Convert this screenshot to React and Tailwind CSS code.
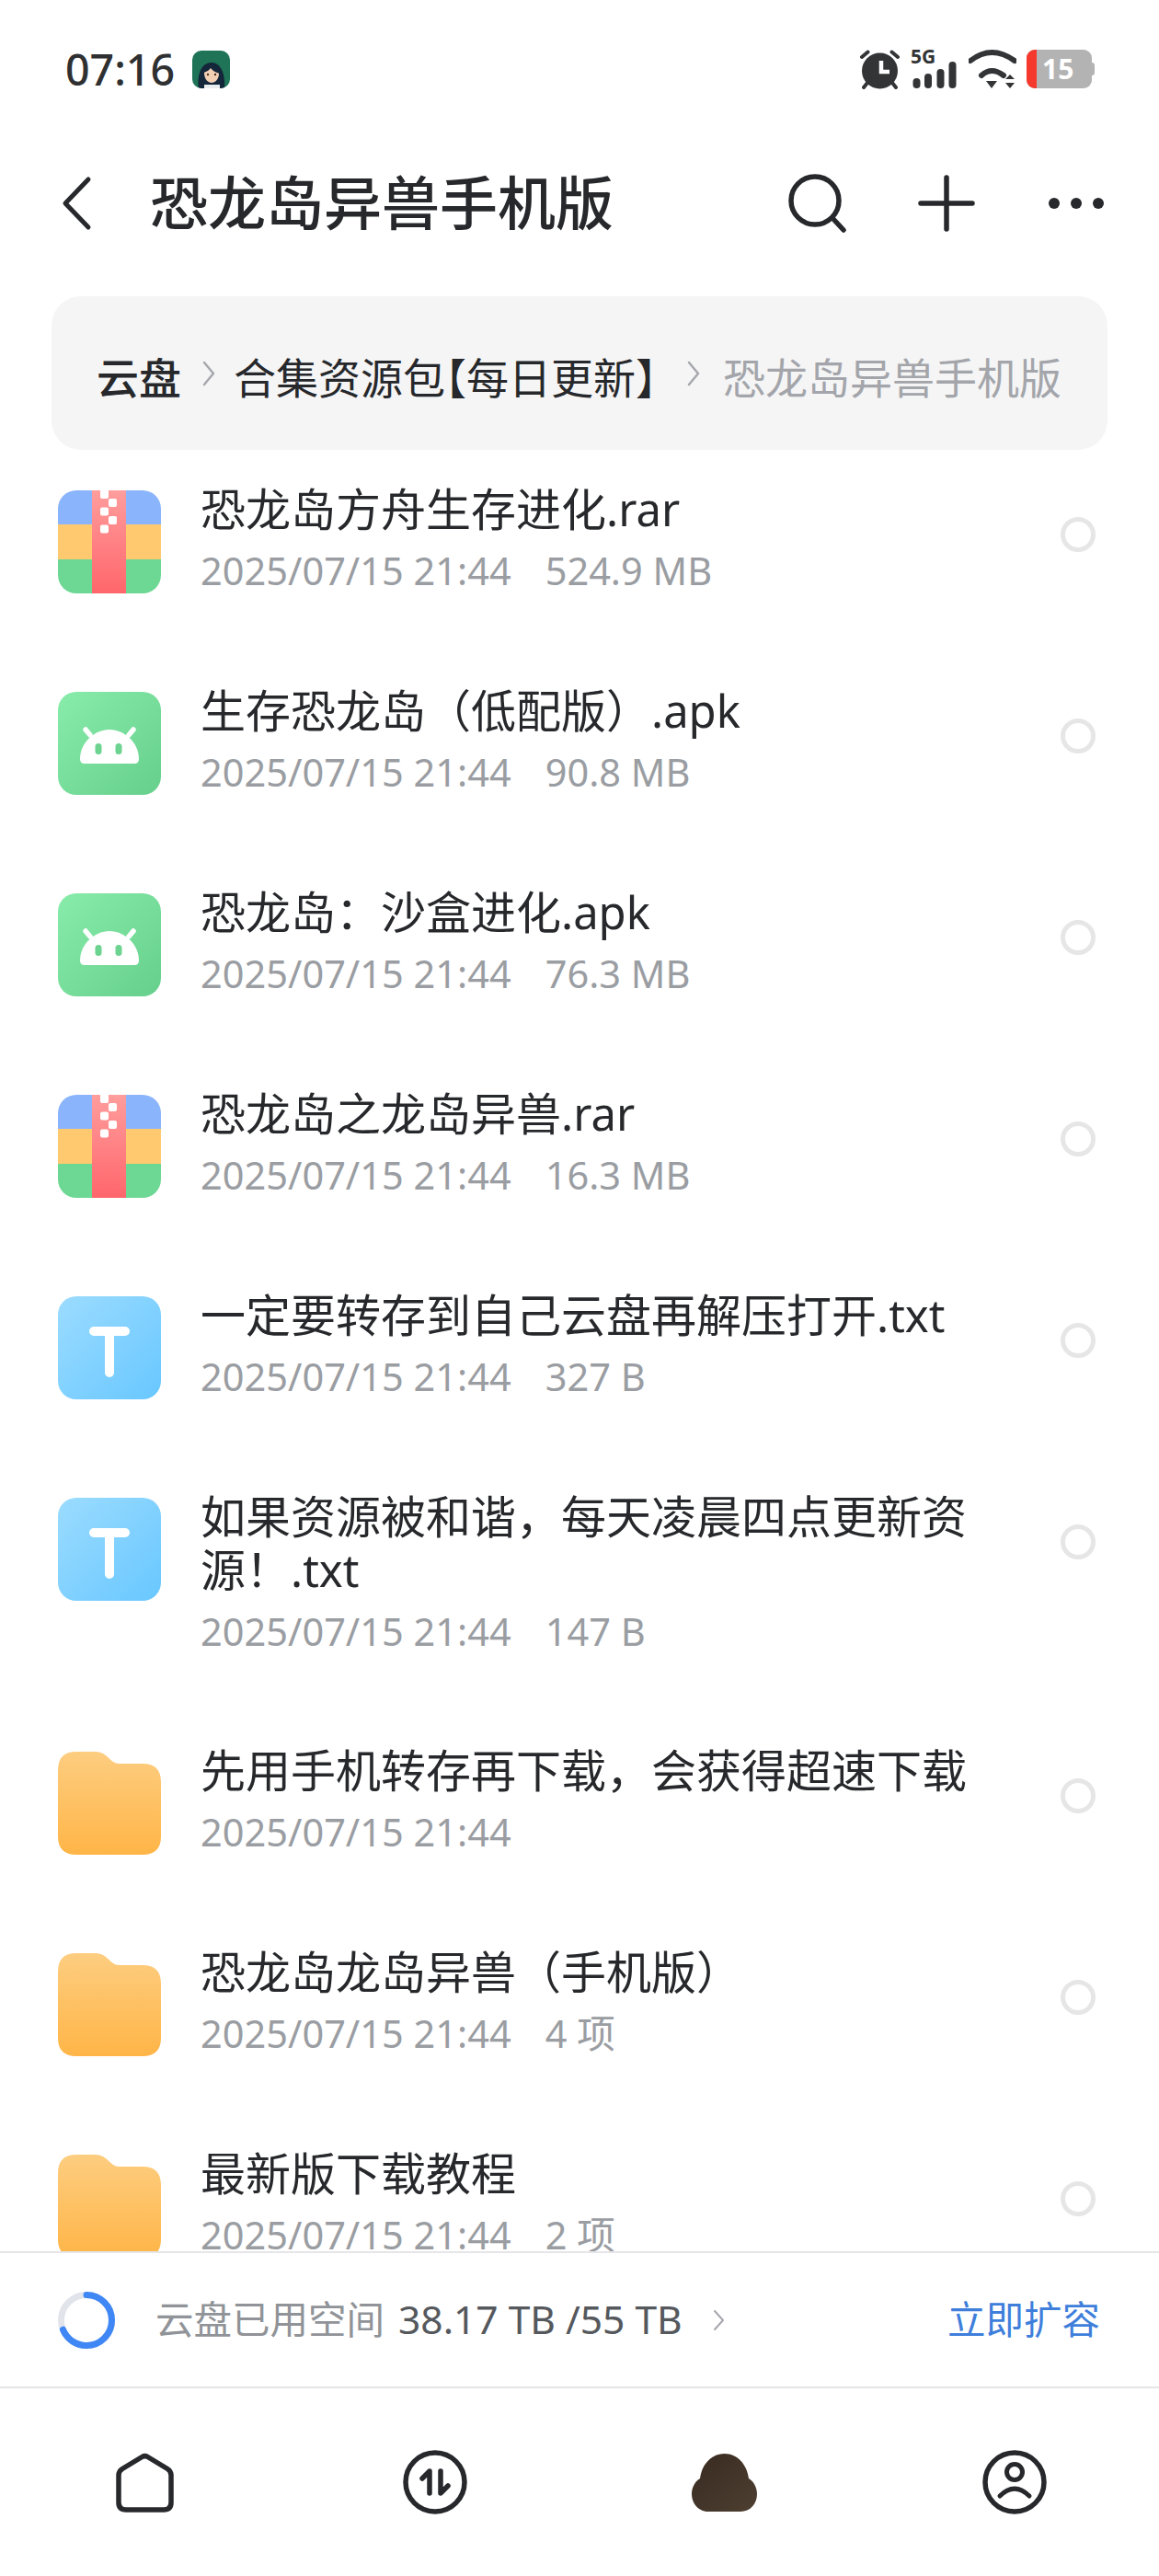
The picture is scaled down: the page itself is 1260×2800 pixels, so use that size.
import React from "react";

const files = [
  { name: "恐龙岛方舟生存进化.rar", extra: "524.9 MB", type: "rar" },
  { name: "生存恐龙岛（低配版）.apk", extra: "90.8 MB", type: "apk" },
  { name: "恐龙岛：沙盒进化.apk", extra: "76.3 MB", type: "apk" },
  { name: "恐龙岛之龙岛异兽.rar", extra: "16.3 MB", type: "rar" },
  { name: "一定要转存到自己云盘再解压打开.txt", extra: "327 B", type: "txt" },
  { name: "如果资源被和谐，每天凌晨四点更新资源！.txt", extra: "147 B", type: "txt" },
  { name: "先用手机转存再下载，会获得超速下载", extra: "", type: "folder" },
  { name: "恐龙岛龙岛异兽（手机版）", extra: "4 项", type: "folder" },
  { name: "最新版下载教程", extra: "2 项", type: "folder" },
];

const RarIcon = () => (
  <svg width="112" height="112" viewBox="0 0 112 112">
    <defs>
      <clipPath id="rarClip"><rect width="112" height="112" rx="20" /></clipPath>
      <linearGradient id="zip" x1="0" y1="0" x2="0" y2="1">
        <stop offset="0" stopColor="#ff9d9d" />
        <stop offset="1" stopColor="#ff666b" />
      </linearGradient>
    </defs>
    <g clipPath="url(#rarClip)">
      <rect width="112" height="38" fill="#8ab4fc" />
      <rect y="37" width="112" height="38" fill="#ffc970" />
      <rect y="75" width="112" height="37" fill="#6dd794" />
      <rect x="37" width="37" height="112" fill="url(#zip)" />
      <rect x="46" y="-2" width="9" height="11" rx="2" fill="#fff" />
      <rect x="55" y="9" width="9" height="9" rx="2" fill="#fff" />
      <rect x="46" y="18.500" width="9" height="9" rx="2" fill="#fff" />
      <rect x="55" y="28" width="9" height="9" rx="2" fill="#fff" />
      <rect x="46" y="37.500" width="9" height="9" rx="2" fill="#fff" />
    </g>
  </svg>
);

const ApkIcon = () => (
  <svg width="112" height="112" viewBox="0 0 112 112">
    <defs>
      <linearGradient id="apkBg" x1="0" y1="0" x2="1" y2="1">
        <stop offset="0" stopColor="#88ecaa" />
        <stop offset="1" stopColor="#66cf8c" />
      </linearGradient>
    </defs>
    <rect width="112" height="112" rx="20" fill="url(#apkBg)" />
    <path d="M29 78H83Q88 78 88 73C88 55 72 41 56 41C40 41 24 55 24 73Q24 78 29 78Z" fill="#fff" />
    <path d="M35 47L30 41M77 47L82 41" stroke="#fff" strokeWidth="5.500" strokeLinecap="round" />
    <rect x="40.500" y="56" width="7" height="12" rx="3.500" fill="#6cd390" />
    <rect x="62.500" y="56" width="7" height="12" rx="3.500" fill="#6cd390" />
  </svg>
);

const TxtIcon = () => (
  <svg width="112" height="112" viewBox="0 0 112 112">
    <defs>
      <linearGradient id="txtBg" x1="0" y1="0" x2="1" y2="1">
        <stop offset="0" stopColor="#9cdcff" />
        <stop offset="1" stopColor="#68c7ff" />
      </linearGradient>
    </defs>
    <rect width="112" height="112" rx="20" fill="url(#txtBg)" />
    <path d="M39 38H73M56 38V83" stroke="#fff" strokeWidth="10" strokeLinecap="round" />
  </svg>
);

const FolderIcon = () => (
  <svg width="112" height="112" viewBox="0 0 112 112">
    <defs>
      <linearGradient id="folderBg" x1="0" y1="0" x2="0" y2="1">
        <stop offset="0" stopColor="#fdcd80" />
        <stop offset="1" stopColor="#ffb547" />
      </linearGradient>
    </defs>
    <path d="M0 20Q0 0 20 0H40Q47 0 52 4L58 9.500Q62 13 67 13H92Q112 13 112 33V92Q112 112 92 112H20Q0 112 0 92Z" fill="url(#folderBg)" />
  </svg>
);

const icons = { rar: RarIcon, apk: ApkIcon, txt: TxtIcon, folder: FolderIcon };

const Crumb = ({ className }) => (
  <svg width="16" height="28" viewBox="0 0 16 28" className={className}>
    <path d="M3 2L13 14L3 26" fill="none" stroke="#a6a8ad" strokeWidth="2.500" strokeLinecap="round" strokeLinejoin="round" />
  </svg>
);

const Row = ({ file }) => {
  const Icon = icons[file.type];
  return (
    <div className="flex items-start shrink-0">
      <div className="ml-[63px] mt-[9px] w-[112px] h-[112px] shrink-0"><Icon /></div>
      <div className="ml-[43px] w-[860px]">
        <div className="text-[49px] leading-[58px] text-[#26282b]">{file.name}</div>
        <div className="mt-[15px] h-[47px] flex text-[41.500px] leading-[47px] text-[#9a9da2]">
          <span>2025/07/15 21:44</span>
          {file.extra && <span className="ml-[37px]">{file.extra}</span>}
        </div>
      </div>
      <div className="ml-[75px] mt-[38px] w-[38px] h-[38px] shrink-0 rounded-full border-[5px] border-[#e6e6e6]" />
    </div>
  );
};

const App = () => {
  return (
    <div lang="zh-CN" className="w-[1260px] h-[2800px] bg-white flex flex-col overflow-hidden font-['Noto_Sans','Noto_Sans_CJK_SC',sans-serif]">
      {/* status bar */}
      <div className="h-[150px] shrink-0 flex items-center pl-[71px] pr-[70px]">
        <span className="text-[46.500px] leading-none font-medium text-[#2f3031]">07:16</span>
        <svg width="41" height="41" viewBox="0 0 41 41" className="ml-[19px]">
          <defs><clipPath id="ava"><rect width="41" height="41" rx="10" /></clipPath></defs>
          <g clipPath="url(#ava)">
            <rect width="41" height="41" fill="#1f7356" />
            <path d="M7 41C5 30 8 13 21 13C33 13 36 30 35 41Z" fill="#14263a" />
            <path d="M13 41H30V37H13Z" fill="#e8eef0" />
            <path d="M13 24C13 19 17 17 21 17C26 17 29 20 29 25C29 31 25 35 21 35C17 35 13 31 13 24Z" fill="#f3cfb4" />
            <path d="M12 24C13 18 18 15 23 16C27 17 30 20 30 25C26 24 22 22 20 19C18 22 15 23 12 24Z" fill="#14263a" />
            <circle cx="17" cy="26" r="1.200" fill="#4a2d22" />
            <circle cx="25" cy="26" r="1.200" fill="#4a2d22" />
          </g>
        </svg>
        <div className="ml-auto flex items-center">
          {/* alarm */}
          <svg width="43" height="44" viewBox="0 0 43 44">
            <path d="M2 9L8.500 3.500M41 9L34.500 3.500M8 37L4 42M35 37L39 42" stroke="#333436" strokeWidth="4" strokeLinecap="round" />
            <circle cx="21.500" cy="24" r="19.500" fill="#333436" />
            <path d="M23 13V25H32" fill="none" stroke="#fff" strokeWidth="4.500" />
          </svg>
          <div className="ml-[12px] w-[50px] h-[42px] flex flex-col">
            <span className="h-[15px] text-[21px] leading-[15px] font-bold text-[#333436]">5G</span>
            <svg width="50" height="29" viewBox="0 0 50 29" className="mt-[-2px]">
              <rect x="2.500" y="18" width="8" height="11" rx="4" fill="#333436" />
              <rect x="15" y="13" width="8" height="16" rx="4" fill="#333436" />
              <rect x="28.500" y="8" width="8" height="21" rx="4" fill="#333436" />
              <rect x="41.500" y="0" width="8" height="29" rx="4" fill="#333436" />
            </svg>
          </div>
          {/* wifi */}
          <svg width="52" height="44" viewBox="0 0 52 44" className="ml-[13px]">
            <path d="M2 13Q25 -5 50 13M14 29Q25 19 38 29" fill="none" stroke="#333436" strokeWidth="6" strokeLinecap="round" />
            <path d="M19 35H31L25 43Z" fill="#333436" />
            <path d="M40 33H50L45 28ZM40 37H50L45 43Z" fill="#333436" />
          </svg>
          {/* battery */}
          <div className="ml-[11px] flex items-center">
            <div className="w-[71px] h-[42px] rounded-[9px] overflow-hidden flex bg-[#b3b3b3]">
              <div className="w-[11px] bg-[#f5392d]" />
              <span className="ml-[6px] text-[30px] leading-[42px] font-bold text-white">15</span>
            </div>
            <div className="w-[3px] h-[14px] rounded-r-[3px] bg-[#b3b3b3]" />
          </div>
        </div>
      </div>

      {/* header */}
      <div className="h-[142px] shrink-0 flex items-center pl-[66px]">
        <svg width="34" height="60" viewBox="0 0 34 60">
          <path d="M30 4L5 30L30 56" fill="none" stroke="#26282b" strokeWidth="5" strokeLinecap="round" strokeLinejoin="round" />
        </svg>
        <h1 className="ml-[63px] mt-[-3px] text-[63px] leading-none font-medium text-[#26282b]">恐龙岛异兽手机版</h1>
        <svg width="63" height="64" viewBox="0 0 63 64" className="ml-auto">
          <circle cx="29" cy="29" r="26" fill="none" stroke="#26282b" strokeWidth="5.500" />
          <path d="M48 48L60 61" stroke="#26282b" strokeWidth="5.500" strokeLinecap="round" />
        </svg>
        <svg width="62" height="62" viewBox="0 0 62 62" className="ml-[78px]">
          <path d="M31 3V59M3 31H59" stroke="#26282b" strokeWidth="5.500" strokeLinecap="round" />
        </svg>
        <svg width="60" height="14" viewBox="0 0 60 14" className="ml-[80px] mr-[60px]">
          <circle cx="6" cy="7" r="6" fill="#26282b" />
          <circle cx="30" cy="7" r="6" fill="#26282b" />
          <circle cx="54" cy="7" r="6" fill="#26282b" />
        </svg>
      </div>

      {/* breadcrumb */}
      <div className="mt-[30px] mx-[56px] h-[167px] shrink-0 rounded-[32px] bg-[#f5f5f6] flex items-center pl-[49px] pt-[8px] text-[46px] leading-none">
        <span className="font-medium text-[#26282b]">云盘</span>
        <Crumb className="ml-[22px] mb-[8px]" />
        <span className="ml-[19px] text-[#26282b] [font-feature-settings:'halt']">合集资源包【每日更新】</span>
        <Crumb className="ml-[32px] mb-[8px]" />
        <span className="ml-[24px] text-[#a3a5aa]">恐龙岛异兽手机版</span>
      </div>

      {/* file list */}
      <div className="flex-1 min-h-0 overflow-hidden flex flex-col gap-[98px] pt-[35px]">
        {files.map((f) => <Row key={f.name} file={f} />)}
      </div>

      {/* storage bar */}
      <div className="h-[149px] shrink-0 border-y-2 border-[#e6e6e8] flex items-center pl-[63px] pr-[64px] bg-white">
        <svg width="62" height="62" viewBox="0 0 62 62">
          <circle cx="31" cy="31" r="27.500" fill="none" stroke="#e1e5eb" strokeWidth="7" />
          <circle cx="31" cy="31" r="27.500" fill="none" stroke="#3f87f5" strokeWidth="7" strokeLinecap="round" strokeDasharray="119 173" transform="rotate(-90 31 31)" />
        </svg>
        <span className="ml-[44px] text-[41.500px] leading-none text-[#909398]">云盘已用空间</span>
        <span className="ml-[15px] text-[42.500px] leading-none text-[#55585d]">38.17 TB /55 TB</span>
        <svg width="14" height="24" viewBox="0 0 14 24" className="ml-[33px]">
          <path d="M2 2L11 12L2 22" fill="none" stroke="#a6a8ad" strokeWidth="2" strokeLinecap="round" strokeLinejoin="round" />
        </svg>
        <span className="ml-auto text-[41.500px] leading-none text-[#3f7fdb]">立即扩容</span>
      </div>

      {/* bottom nav */}
      <div className="h-[204px] shrink-0 grid grid-cols-4">
        <div className="flex items-center justify-center">
          <svg width="63" height="65" viewBox="0 0 63 65">
            <path d="M28.500 4.500Q31.500 2.700 34.500 4.500L56 17.500Q60 20 60 24.500V54Q60 62 52 62H11Q3 62 3 54V24.500Q3 20 7 17.500Z" fill="none" stroke="#26282b" strokeWidth="5.500" strokeLinejoin="round" />
          </svg>
        </div>
        <div className="flex items-center justify-center">
          <svg width="70" height="70" viewBox="0 0 70 70">
            <circle cx="35" cy="35" r="32" fill="none" stroke="#26282b" strokeWidth="5.500" />
            <path d="M29 47V23L21 31M41 23V47L49 39" fill="none" stroke="#26282b" strokeWidth="5.500" strokeLinecap="round" strokeLinejoin="round" />
          </svg>
        </div>
        <div className="flex items-center justify-center">
          <svg width="71" height="63" viewBox="0 0 71 63">
            <defs>
              <linearGradient id="cloud" x1="0" y1="0" x2="1" y2="1">
                <stop offset="0" stopColor="#372a1f" />
                <stop offset="1" stopColor="#4e3f32" />
              </linearGradient>
            </defs>
            <path d="M18 63C7 63 0 54 0 44C0 36 4 30 9 27C11 11 22 0 35.500 0C49 0 60 11 62 27C67 30 71 36 71 44C71 54 64 63 53 63Z" fill="url(#cloud)" />
          </svg>
        </div>
        <div className="flex items-center justify-center">
          <svg width="70" height="70" viewBox="0 0 70 70">
            <circle cx="35" cy="35" r="32" fill="none" stroke="#26282b" strokeWidth="5.500" />
            <circle cx="35" cy="24" r="8.500" fill="none" stroke="#26282b" strokeWidth="5" />
            <path d="M19 50Q35 34 51 50" fill="none" stroke="#26282b" strokeWidth="5" strokeLinecap="round" />
          </svg>
        </div>
      </div>
    </div>
  );
};

export default App;
